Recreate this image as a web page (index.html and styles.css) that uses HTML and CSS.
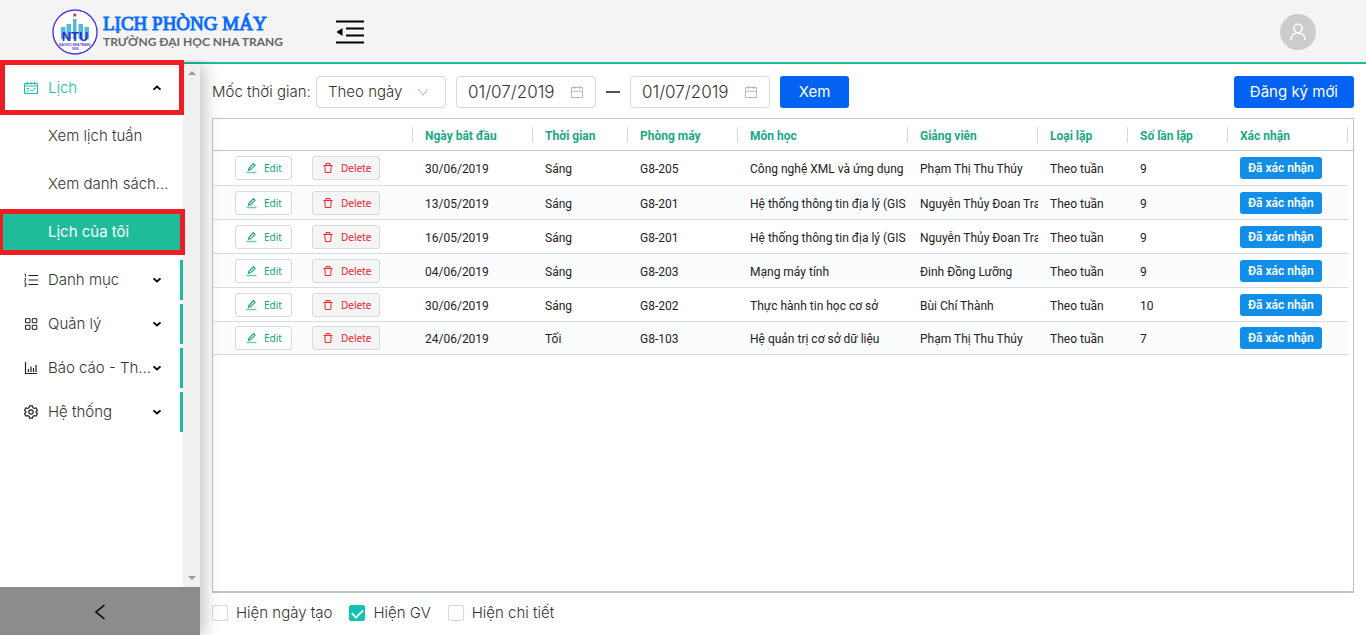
FILE: index.html
```html
<!DOCTYPE html>
<html lang="vi">
<head>
<meta charset="utf-8">
<title>Lịch phòng máy</title>
<meta name="viewport" content="width=device-width, initial-scale=1">
<link rel="stylesheet" href="styles.css">
</head>
<body>
<svg class="sprite" aria-hidden="true">
  <symbol id="i-edit" viewBox="0 0 12 12"><path d="M.5 10.500h10" stroke-width="1.500" opacity=".6"/><path d="M2.500 8.300l.5-2L7.400 1.700l1.600 1.600L4.500 7.800z" stroke-width="1.200"/></symbol>
  <symbol id="i-trash" viewBox="0 0 12 12"><path d="M.5 3.500h9M3 3.300V1.500h4v1.800M1.800 3.700l.5 6.800h5.400l.5-6.800"/></symbol>
  <symbol id="i-calendar" viewBox="0 0 14 14"><path d="M1.500 2.500h11v10h-11zM1.500 6.300h11M4.300.8v3.200M9.700.8v3.200"/></symbol>
  <symbol id="i-down" viewBox="0 0 12 12"><path d="M1.500 3L6 9.300 10.500 3"/></symbol>
  <symbol id="i-caret" viewBox="0 0 10 10"><path d="M1.500 3.300L5 6.500l3.500-3.200"/></symbol>
</svg>
<header class="header">
  <a class="brand" href="#">
    <svg class="brand-mark" viewBox="0 0 46 46" aria-hidden="true">
      <circle cx="23" cy="23" r="22" fill="#fff" stroke="#4a3be0" stroke-width="1.400"/>
      <path fill="#55b9de" d="M9 18h4.500v12H9zM14.500 15H19v15h-4.500zM21 10h3.500v20H21zM26.500 15H31v15h-4.500zM32.500 18H37v12h-4.500z"/>
      <path fill="#e02020" d="M22.800 3.800l.6 1.500 1.600.1-1.200 1 .4 1.600-1.400-.9-1.400.9.4-1.600-1.200-1 1.600-.1z"/>
      <text class="mark-name" x="23" y="32" text-anchor="middle">NTU</text>
      <text class="mark-small" x="23" y="36.500" text-anchor="middle">ĐẠI HỌC NHA TRANG</text>
      <text class="mark-small" x="23" y="41" text-anchor="middle">1959</text>
    </svg>
    <span class="brand-text">
      <span class="brand-title">LỊCH PHÒNG MÁY</span>
      <span class="brand-sub">TRƯỜNG ĐẠI HỌC NHA TRANG</span>
    </span>
  </a>
  <button class="fold" type="button" aria-label="Thu gọn menu">
    <svg viewBox="0 0 28 24"><path d="M0 1.500h28M10 8.500h18M10 15.500h18M0 22.500h28" stroke="#000" stroke-width="2.200"/><path d="M6.500 8v8L.5 12z" fill="#000"/></svg>
  </button>
  <button class="avatar" type="button" aria-label="Tài khoản">
    <svg viewBox="0 0 18 18"><circle cx="9" cy="5.500" r="4.200"/><path d="M2 17c0-4.300 3-7 7-7s7 2.700 7 7"/></svg>
  </button>
</header>
<div class="body">
  <aside class="sider">
    <div class="sider-scroll">
      <nav class="menu">
        <a class="item group open" href="#"><svg class="icon" viewBox="0 0 14 14"><path d="M.5 2.500h13v10H.5zM.5 5h13M3.500.8v2.800M7 .8v2.800M10.500.8v2.800M2.500 7.500H5M2.500 10H5M6.500 8.500l1.600 1.700 3-3.200"/></svg><span class="label">Lịch</span><svg class="caret"><use href="#i-caret"/></svg></a>
        <a class="item sub" href="#"><span class="label">Xem lịch tuần</span></a>
        <a class="item sub" href="#"><span class="label">Xem danh sách...</span></a>
        <a class="item sub selected" href="#"><span class="label">Lịch của tôi</span></a>
        <a class="item group" href="#"><svg class="icon" viewBox="0 0 14 14"><path d="M4.500 2.500H14M4.500 7H14M4.500 11.500H14"/><path d="M.5 1h1v3M.3 5.700h1.700L.5 8.200H2M.3 10h1.700v1.600H.8M2 11.600v1.600H.3" stroke-width=".8"/></svg><span class="label">Danh mục</span><svg class="caret"><use href="#i-caret"/></svg></a>
        <a class="item group" href="#"><svg class="icon" viewBox="0 0 14 14"><path d="M1.500 1.700h4.500v4H1.500zM8.300 1.700h4.500v4H8.300zM1.500 8.300h4.500v4H1.500zM8.300 8.300h4.500v4H8.300z"/></svg><span class="label">Quản lý</span><svg class="caret"><use href="#i-caret"/></svg></a>
        <a class="item group" href="#"><svg class="icon" viewBox="0 0 14 14"><path d="M1.500 1v11.500H13M4.500 11V8M7 11V5.500M9.500 11V7M12 11V4" stroke-width="1.200"/></svg><span class="label">Báo cáo - Th...</span><svg class="caret"><use href="#i-caret"/></svg></a>
        <a class="item group" href="#"><svg class="icon" viewBox="0 0 14 14"><path d="M5.600.8h2.800l.5 1.800 1.300.8 1.900-.5 1.400 2.400L12.100 6.600v.8l1.400 1.300-1.400 2.400-1.900-.5-1.300.8-.5 1.800H5.600l-.5-1.800-1.300-.8-1.900.5L.5 8.700l1.400-1.300v-.8L.5 5.300l1.400-2.400 1.900.5 1.300-.8z" stroke-width="1.200"/><circle cx="7" cy="7" r="2.200" stroke-width="1.200"/></svg><span class="label">Hệ thống</span><svg class="caret"><use href="#i-caret"/></svg></a>
      </nav>
      <div class="scrollbar" aria-hidden="true"><i class="arrow up"></i><i class="arrow down"></i></div>
    </div>
    <button class="trigger" type="button" aria-label="Thu gọn"><svg viewBox="0 0 12 16"><path d="M10.500 1L2 8l8.500 7"/></svg></button>
    <div class="mark mark-group"></div>
    <div class="mark mark-item"></div>
  </aside>
  <main class="main">
    <form class="toolbar">
      <label for="range">Mốc thời gian:</label>
      <span class="field field-select"><select id="range"><option>Theo ngày</option></select><svg><use href="#i-down"/></svg></span>
      <span class="field field-date"><input type="text" value="01/07/2019" aria-label="Từ ngày"><svg><use href="#i-calendar"/></svg></span>
      <span class="dash"></span>
      <span class="field field-date"><input type="text" value="01/07/2019" aria-label="Đến ngày"><svg><use href="#i-calendar"/></svg></span>
      <button class="primary" type="button">Xem</button>
      <button class="primary create" type="button">Đăng ký mới</button>
    </form>
    <div class="grid">
      <table>
        <colgroup><col class="c-act"><col class="c-date"><col class="c-time"><col class="c-room"><col class="c-subject"><col class="c-teacher"><col class="c-type"><col class="c-count"><col class="c-state"><col></colgroup>
        <thead><tr><th></th><th>Ngày bắt đầu</th><th>Thời gian</th><th>Phòng máy</th><th>Môn học</th><th>Giảng viên</th><th>Loại lặp</th><th>Số lần lặp</th><th>Xác nhận</th><th class="rest"></th></tr></thead>
        <tbody>
          <tr><td class="acts"><button class="act edit" type="button"><svg><use href="#i-edit"/></svg>Edit</button><button class="act del" type="button"><svg><use href="#i-trash"/></svg>Delete</button></td><td>30/06/2019</td><td>Sáng</td><td>G8-205</td><td>Công nghệ XML và ứng dụng</td><td>Phạm Thị Thu Thúy</td><td>Theo tuần</td><td>9</td><td class="state"><span class="tag">Đã xác nhận</span></td><td class="rest"></td></tr>
          <tr><td class="acts"><button class="act edit" type="button"><svg><use href="#i-edit"/></svg>Edit</button><button class="act del" type="button"><svg><use href="#i-trash"/></svg>Delete</button></td><td>13/05/2019</td><td>Sáng</td><td>G8-201</td><td>Hệ thống thông tin địa lý (GIS</td><td>Nguyễn Thủy Đoan Tra</td><td>Theo tuần</td><td>9</td><td class="state"><span class="tag">Đã xác nhận</span></td><td class="rest"></td></tr>
          <tr><td class="acts"><button class="act edit" type="button"><svg><use href="#i-edit"/></svg>Edit</button><button class="act del" type="button"><svg><use href="#i-trash"/></svg>Delete</button></td><td>16/05/2019</td><td>Sáng</td><td>G8-201</td><td>Hệ thống thông tin địa lý (GIS</td><td>Nguyễn Thủy Đoan Tra</td><td>Theo tuần</td><td>9</td><td class="state"><span class="tag">Đã xác nhận</span></td><td class="rest"></td></tr>
          <tr><td class="acts"><button class="act edit" type="button"><svg><use href="#i-edit"/></svg>Edit</button><button class="act del" type="button"><svg><use href="#i-trash"/></svg>Delete</button></td><td>04/06/2019</td><td>Sáng</td><td>G8-203</td><td>Mạng máy tính</td><td>Đinh Đồng Lưỡng</td><td>Theo tuần</td><td>9</td><td class="state"><span class="tag">Đã xác nhận</span></td><td class="rest"></td></tr>
          <tr><td class="acts"><button class="act edit" type="button"><svg><use href="#i-edit"/></svg>Edit</button><button class="act del" type="button"><svg><use href="#i-trash"/></svg>Delete</button></td><td>30/06/2019</td><td>Sáng</td><td>G8-202</td><td>Thực hành tin học cơ sở</td><td>Bùi Chí Thành</td><td>Theo tuần</td><td>10</td><td class="state"><span class="tag">Đã xác nhận</span></td><td class="rest"></td></tr>
          <tr><td class="acts"><button class="act edit" type="button"><svg><use href="#i-edit"/></svg>Edit</button><button class="act del" type="button"><svg><use href="#i-trash"/></svg>Delete</button></td><td>24/06/2019</td><td>Tối</td><td>G8-103</td><td>Hệ quản trị cơ sở dữ liệu</td><td>Phạm Thị Thu Thúy</td><td>Theo tuần</td><td>7</td><td class="state"><span class="tag">Đã xác nhận</span></td><td class="rest"></td></tr>
        </tbody>
      </table>
    </div>
    <div class="options">
      <label><input type="checkbox">Hiện ngày tạo</label>
      <label><input type="checkbox" checked>Hiện GV</label>
      <label><input type="checkbox">Hiện chi tiết</label>
    </div>
  </main>
</div>
</body>
</html>
```
FILE: styles.css
```css
* { box-sizing: border-box; }

body {
  margin: 0;
  height: 100vh;
  display: flex;
  flex-direction: column;
  overflow: hidden;
  background: #fff;
  color: #333;
  font: 300 15px/24px Inter, "Noto Sans", sans-serif;
}

button, input, select { font: inherit; color: inherit; }
button { cursor: pointer; }
a { color: inherit; text-decoration: none; }
svg { flex: none; fill: none; stroke: currentColor; }
.sprite { display: none; }

/* Header */
.header {
  display: flex;
  align-items: center;
  flex: none;
  height: 64px;
  padding: 2px 50px 0 52px;
  background: #f4f4f4;
  border-bottom: 2px solid #1fbc9c;
}
.brand { display: flex; align-items: center; gap: 5px; width: 284px; }
.brand-mark { width: 46px; height: 46px; stroke: none; }
.brand-text { display: flex; flex-direction: column; white-space: nowrap; }
.brand-title {
  color: #0a6cff;
  font: 400 19px/20px "Liberation Serif", serif;
  -webkit-text-stroke: 1px #0a6cff;
}
.brand-sub { color: #666; font: 700 12px/16px Lato, sans-serif; }
.mark-name { fill: #2b2bd0; font: 700 13px "Liberation Sans", sans-serif; }
.mark-small { fill: #3a34d8; font: 700 3px "Liberation Sans", sans-serif; }
.fold { padding: 0; border: 0; background: none; }
.fold svg { display: block; width: 28px; height: 24px; stroke: none; }
.avatar {
  display: grid;
  place-items: center;
  width: 36px;
  height: 36px;
  margin-left: auto;
  padding: 0;
  border: 0;
  border-radius: 50%;
  background: #ccc;
  color: #fff;
}
.avatar svg { width: 18px; height: 18px; stroke-width: 1.5; }

.body { display: flex; flex: 1; min-height: 0; }

/* Side menu */
.sider {
  position: relative;
  z-index: 1;
  display: flex;
  flex-direction: column;
  flex: none;
  width: 200px;
  background: #fff;
  box-shadow: 4px 0 16px rgba(0, 0, 0, .25);
  clip-path: inset(-4px -24px 0 0);
}
.sider-scroll { display: flex; flex: 1; min-height: 0; }
.menu { flex: 1; min-width: 0; padding-top: 4px; }
.item {
  display: flex;
  align-items: center;
  height: 40px;
  margin-bottom: 4px;
  padding: 0 18px 0 24px;
}
.label { flex: 1; min-width: 0; overflow: hidden; white-space: nowrap; text-overflow: ellipsis; }
.group { border-right: 3px solid #1fbc9c; }
.open { color: #13c2b0; border-color: transparent; }
.sub { height: 40px; margin: 8px 0; padding: 0 8px 0 48px; }
.selected { background: #1fbc9c; color: #fff; font-weight: 400; }
.icon { width: 14px; height: 14px; margin-right: 10px; }
.group:not(.open) .icon { color: #222; }
.caret { width: 10px; height: 10px; color: #000; stroke-width: 1.8; }
.open .caret { transform: rotate(180deg); }

.scrollbar {
  display: flex;
  flex-direction: column;
  justify-content: space-between;
  align-items: center;
  width: 17px;
  padding: 7px 0;
  background: #f0f0f0;
}
.arrow { border: 4px solid transparent; }
.up { border-top: 0; border-bottom-color: #999; }
.down { border-bottom: 0; border-top-color: #999; }

.trigger {
  display: grid;
  place-items: center;
  flex: none;
  height: 48px;
  padding: 2px 0 0;
  border: 0;
  background: #8c8c8c;
  color: #000;
}
.trigger svg { width: 12px; height: 16px; stroke-width: 1.6; }

/* Red highlight frames over the menu */
.mark { position: absolute; left: 0; border: 5px solid #ee1c25; pointer-events: none; }
.mark-group { top: -4px; width: 184px; height: 55px; }
.mark-item { top: 145px; width: 185px; height: 46px; border-left-width: 3px; }

/* Content */
.main { display: flex; flex-direction: column; flex: 1; min-width: 0; padding: 12px 12px 10px; }
.toolbar { display: flex; align-items: center; height: 32px; margin-bottom: 10px; }
.toolbar label { width: 104px; white-space: nowrap; }
.field { display: flex; position: relative; height: 32px; margin-right: 10px; }
.field-select { width: 130px; }
.field-date { width: 140px; font-size: 17px; }
.field select, .field input {
  width: 100%;
  height: 32px;
  margin: 0;
  padding: 0 11px;
  appearance: none;
  border: 1px solid #d9d9d9;
  border-radius: 4px;
  background: #fff;
}
.field svg { position: absolute; right: 12px; top: 9px; width: 14px; height: 14px; color: #b8b8b8; pointer-events: none; }
.field-select svg { right: 17px; top: 10px; width: 12px; height: 12px; }
.dash { width: 14px; height: 2px; margin-right: 10px; background: #555; }
.primary {
  min-width: 69px;
  height: 32px;
  padding: 0 16px;
  border: 0;
  border-radius: 3px;
  background: #0362f2;
  color: #fff;
  font-weight: 400;
  white-space: nowrap;
}
.create { margin-left: auto; }

.grid {
  flex: 1;
  min-height: 0;
  overflow: hidden;
  border: 1px solid #bdc3c7;
  border-bottom-width: 2px;
}
table { width: 100%; table-layout: fixed; border-collapse: separate; border-spacing: 0; font: 400 12px/16px Roboto, sans-serif; color: #222; }
.c-act { width: 200px; }
.c-date { width: 120px; }
.c-time { width: 95px; }
.c-room { width: 110px; }
.c-subject { width: 170px; }
.c-teacher { width: 130px; }
.c-type { width: 90px; }
.c-count { width: 100px; }
.c-state { width: 120px; }
th, td { padding: 2px 0 0 12px; overflow: hidden; white-space: nowrap; text-align: left; }
th {
  height: 32px;
  border-bottom: 1px solid #bdc3c7;
  background: linear-gradient(#d4d8da, #d4d8da) right center / 1px 16px no-repeat;
  color: #1ba784;
  font-weight: 700;
}
td { height: 34px; border-bottom: 1px solid #d9dcde; }
tbody tr:first-child td { height: 35px; }
tbody tr:last-child td { height: 33px; }
tbody tr:nth-child(even) td:not(.rest) { background: #fbfcfe; }
th.rest { background: none; }
td.rest { border: 0; }
td.acts { padding: 0 0 0 22px; }
td.state { padding-top: 0; }
.act {
  display: inline-flex;
  align-items: center;
  gap: 6px;
  height: 24px;
  padding: 0 10px;
  border: 1px solid #d9d9d9;
  border-radius: 3px;
  background: #fff;
  font: 400 10px/16px "Noto Sans", sans-serif;
  vertical-align: middle;
}
.act svg { width: 12px; height: 12px; }
.edit { width: 57px; margin-right: 20px; color: #12a182; }
.del { width: 68px; background: #f5f5f5; color: #f5222d; }
.tag {
  display: inline-block;
  padding: 3px 8px;
  border-radius: 3px;
  background: #108ee9;
  color: #fff;
  font-weight: 600;
  vertical-align: middle;
}

.options { display: flex; gap: 17px; margin-top: 8px; }
.options label { display: flex; align-items: center; gap: 8px; white-space: nowrap; }
.options input {
  display: grid;
  place-items: center;
  width: 16px;
  height: 16px;
  margin: 0;
  appearance: none;
  border: 1px solid #d9d9d9;
  border-radius: 2px;
  background: #fff;
}
.options input:checked { border-color: #0fc4b4; background: #0fc4b4; }
.options input:checked::after {
  content: "";
  width: 5px;
  height: 9px;
  border: solid #fff;
  border-width: 0 2px 2px 0;
  transform: translateY(-1px) rotate(45deg);
}
```
